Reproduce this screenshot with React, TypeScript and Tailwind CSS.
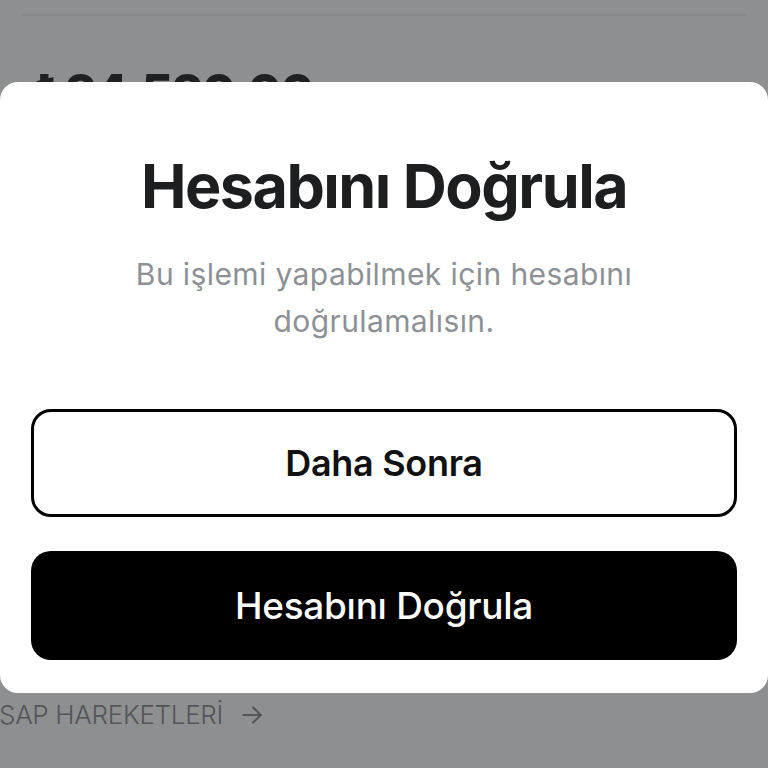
import * as React from "react";

export default function App() {
    return (
        <div
            className="relative h-[768px] w-[768px] overflow-hidden bg-[#8e8f91]"
            style={{ fontFamily: "Inter, 'Noto Sans', sans-serif" }}
        >
            {/* page behind the sheet */}
            <div className="flex h-full flex-col">
                <div className="mx-[22px] mt-[14px] h-[2px] bg-[#87888a]" />
                <div className="ml-[34px] mt-[52px] text-[49px] font-extrabold leading-none tracking-tight text-[#1f2022]">
                    ₺24.520,00
                </div>
                <div className="mt-auto mb-[40px] flex items-center gap-[16px] text-[26px] font-light leading-none text-[#535558]">
                    <span className="-ml-[1px] tracking-[-0.3px]">SAP HAREKETLERİ</span>
                    <svg width="26" height="26" viewBox="0 0 24 24" fill="none" stroke="currentColor" strokeWidth="2" strokeLinecap="round" strokeLinejoin="round">
                        <path d="M4 12h16" />
                        <path d="M13 5l7 7-7 7" />
                    </svg>
                </div>
            </div>

            {/* verification sheet */}
            <div className="absolute left-0 right-0 top-[82px] flex h-[611px] flex-col items-center rounded-[18px] bg-white px-[31px]">
                <h1 className="mt-[74px] text-[61px] font-bold leading-none tracking-[-1.5px] text-[#1d1e20]">
                    Hesabını Doğrula
                </h1>
                <p className="mt-[34px] w-[600px] text-center text-[30px] font-normal leading-[47px] tracking-[0.4px] text-[#8d9094]">
                    Bu işlemi yapabilmek için hesabını
                    <br />
                    doğrulamalısın.
                </p>

                <button className="mt-[64px] flex h-[108px] w-full items-center justify-center rounded-[20px] border-[3px] border-black bg-white text-[36px] font-semibold tracking-[-0.3px] text-[#111]">
                    Daha Sonra
                </button>
                <button className="mt-[34px] flex h-[109px] w-full items-center justify-center rounded-[20px] bg-black text-[37px] font-medium tracking-[-0.3px] text-white">
                    Hesabını Doğrula
                </button>
            </div>
        </div>
    );
}
